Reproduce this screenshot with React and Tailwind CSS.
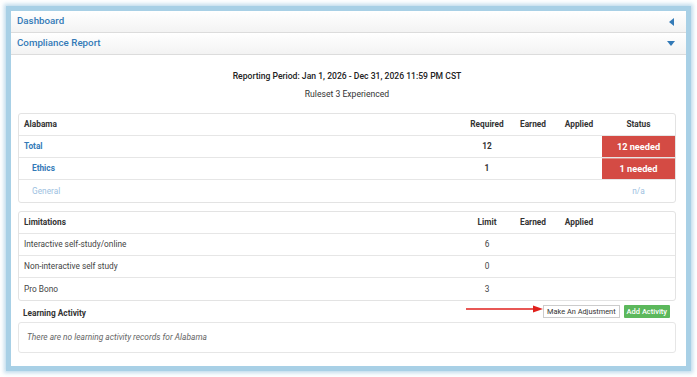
import React from "react";

const font = { fontFamily: "Roboto, 'Liberation Sans', sans-serif" };

function Header({ title, icon }) {
  return (
    <div className="flex h-[22px] items-center justify-between border-b border-[#dcdcdc] bg-gradient-to-b from-white to-[#f3f3f3] pl-[6px] pr-[12px]">
      <span className="text-[9.75px] font-medium text-[#337ab7]">{title}</span>
      {icon}
    </div>
  );
}

function Cell({ children, className = "" }) {
  return <div className={`flex w-[46px] items-center justify-center ${className}`}>{children}</div>;
}

function Row({ name, nameCls = "", req, status, statusCls = "", last, head }) {
  return (
    <div className={`flex h-[22px] ${last ? "" : "border-b border-[#e6e6e6]"} ${head ? "font-bold text-[#333]" : "text-[#444]"}`}>
      <div className={`flex flex-1 items-center pl-[5px] ${nameCls}`}>{name}</div>
      <Cell className={head ? "" : "font-bold text-[#333]"}>{req}</Cell>
      <Cell>{head ? "Earned" : ""}</Cell>
      <Cell>{head ? "Applied" : ""}</Cell>
      <div className={`flex w-[73px] items-center justify-center ${statusCls}`}>{status}</div>
    </div>
  );
}

function LRow({ name, limit, last, head }) {
  return (
    <div className={`flex h-[22px] ${last ? "" : "border-b border-[#e6e6e6]"} ${head ? "font-bold text-[#333]" : "text-[#444]"}`}>
      <div className="flex flex-1 items-center pl-[5px]">{name}</div>
      <Cell>{limit}</Cell>
      <Cell>{head ? "Earned" : ""}</Cell>
      <Cell>{head ? "Applied" : ""}</Cell>
      <div className="w-[73px]" />
    </div>
  );
}

export default function App() {
  return (
    <div className="h-[377px] w-[697px] bg-white p-[6px]" style={font}>
      <div className="flex h-[365px] flex-col border-[5px] border-[#a8d0e6] bg-white shadow-[0_0_4px_2px_rgba(140,190,220,0.55)]">
        <Header
          title="Dashboard"
          icon={
            <svg width="5" height="8" viewBox="0 0 5 8">
              <path d="M5 0 L0 4 L5 8 Z" fill="#337ab7" />
            </svg>
          }
        />
        <Header
          title="Compliance Report"
          icon={
            <svg width="8" height="5" viewBox="0 0 8 5" className="mr-[-1px]">
              <path d="M0 0 L8 0 L4 5 Z" fill="#337ab7" />
            </svg>
          }
        />
        <div className="flex flex-1 flex-col pl-[7px] pr-[10px] pt-[14px] text-[8.3px]">
          <div className="text-center text-[8.6px] font-medium leading-[14px] text-[#222]">
            Reporting Period: Jan 1, 2026 - Dec 31, 2026 11:59 PM CST
          </div>
          <div className="mt-[4px] text-center text-[8.6px] leading-[14px] text-[#333]">Ruleset 3 Experienced</div>

          <div className="mt-[12px] rounded-[3px] border border-[#e3e3e3]">
            <Row head name="Alabama" req="Required" status="Status" />
            <Row name="Total" nameCls="font-bold text-[#337ab7]" req="12" status="12 needed" statusCls="bg-[#d44b44] text-[9.2px] font-bold text-white" />
            <Row name="Ethics" nameCls="pl-[13px] font-bold text-[#337ab7]" req="1" status="1 needed" statusCls="bg-[#d44b44] text-[9.2px] font-bold text-white border-t border-[#e38a86]" />
            <Row last name="General" nameCls="pl-[13px] text-[#9dbfdf]" req="" status="n/a" statusCls="text-[#9dbfdf]" />
          </div>

          <div className="mt-[8px] rounded-[3px] border border-[#e3e3e3]">
            <LRow head name="Limitations" limit="Limit" />
            <LRow name="Interactive self-study/online" limit="6" />
            <LRow name="Non-interactive self study" limit="0" />
            <LRow last name="Pro Bono" limit="3" />
          </div>

          <div className="flex h-[21px] items-center justify-between pl-[5px] pr-[6px]">
            <span className="mt-[3px] font-bold text-[#333]">Learning Activity</span>
            <div className="relative flex items-center gap-[4px]">
              <svg className="absolute right-full top-[0px] mr-[0px]" width="77" height="8" viewBox="0 0 77 8">
                <line x1="0" y1="4" x2="69" y2="4" stroke="#e0201c" strokeWidth="1.6" />
                <path d="M67 0.5 L77 4 L67 7.5 Z" fill="#e0201c" />
              </svg>
              <span className="flex h-[13px] items-center border border-[#ccc] bg-white px-[3px] text-[7.4px] text-[#333]">
                Make An Adjustment
              </span>
              <span className="flex h-[13px] items-center rounded-[1px] bg-[#5cb85c] px-[3px] text-[7.5px] font-medium text-white">
                Add Activity
              </span>
            </div>
          </div>

          <div className="flex h-[31px] items-center rounded-[3px] border border-[#e6e6e6] pl-[8px] text-[8.4px] italic text-[#666]">
            There are no learning activity records for Alabama
          </div>
        </div>
      </div>
    </div>
  );
}
